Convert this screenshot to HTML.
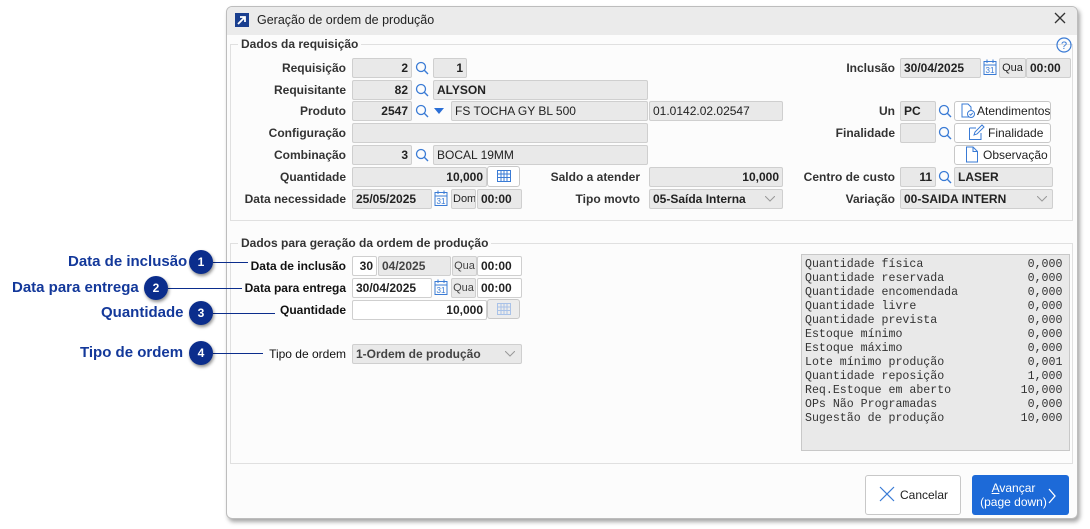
<!DOCTYPE html>
<html><head><meta charset="utf-8"><style>
*{box-sizing:border-box}
body{margin:0;width:1090px;height:529px;background:#fff;position:relative;overflow:hidden;font-family:"Liberation Sans",sans-serif;font-size:12px;color:#222}
.win{position:absolute;left:226px;top:6px;width:852px;height:513px;background:#fcfcfc;border:1px solid #bdbdbd;border-radius:6px;box-shadow:2px 3px 4px rgba(0,0,0,.35);overflow:hidden}
.tb{position:absolute;left:0;top:0;right:0;height:28px;background:#ebebeb}
.a{position:absolute}
.b{position:absolute;height:20px;border:1px solid #cfcfcf;border-radius:2px;background:#e9e9e9;font-weight:bold;font-size:12px;line-height:18px;padding:0 3px;white-space:nowrap;overflow:hidden;color:#222}
.w{background:#fff}
.r{text-align:right}
.n{font-weight:normal}
.s{font-weight:normal;font-size:11px;padding:0 1px;text-align:center}
.l{position:absolute;text-align:right;font-weight:bold;font-size:12px;color:#333;line-height:20px;white-space:nowrap}
.btn{position:absolute;height:20px;border:1px solid #c8c8c8;border-radius:3px;background:#fff;font-size:12px;line-height:18px;text-align:left}
.grp{position:absolute;border:1px solid #e0e0e0}
.gt{position:absolute;background:#fcfcfc;font-weight:bold;font-size:12px;color:#333;padding:0 3px}
.co{position:absolute;font-weight:bold;font-size:15px;color:#13389a;white-space:nowrap}
.c{position:absolute;width:24px;height:24px;border-radius:12px;background:#0b2d8c;color:#fff;font-weight:bold;font-size:12px;text-align:center;line-height:24px;box-shadow:1px 2px 3px rgba(0,0,0,.45);z-index:3}
.ln{position:absolute;height:1px;background:#0b2d8c;z-index:2}
.mono{font-family:"Liberation Mono",monospace;font-size:11.6px;line-height:14px;color:#333}
</style></head><body>

<div class="win">
<div class="tb"></div>
<div class="a" style="left:8px;top:6px;width:14px;height:14px;background:#1a3f8f"><svg width="14" height="14"><path d="M3 11 L10 4 M5 4 H10 V9" stroke="#fff" stroke-width="1.8" fill="none"/></svg></div>
<div class="a" style="left:30px;top:6px;font-size:12.5px;color:#222">Geração de ordem de produção</div>
<div class="a" style="left:826px;top:4px"><svg width="14" height="14"><path d="M2 2 L12 12 M12 2 L2 12" stroke="#333" stroke-width="1.3"/></svg></div>
</div>

<!-- callouts -->
<div class="co" style="left:68px;top:253px">Data de inclusão</div>
<div class="c" style="left:189px;top:250px">1</div>
<div class="ln" style="left:213px;top:262px;width:35px"></div>
<div class="co" style="left:12px;top:279px">Data para entrega</div>
<div class="c" style="left:144px;top:276px">2</div>
<div class="ln" style="left:168px;top:288px;width:74px"></div>
<div class="co" style="left:101px;top:304px">Quantidade</div>
<div class="c" style="left:189px;top:301px">3</div>
<div class="ln" style="left:213px;top:313px;width:62px"></div>
<div class="co" style="left:80px;top:344px">Tipo de ordem</div>
<div class="c" style="left:189px;top:341px">4</div>
<div class="ln" style="left:213px;top:353px;width:50px"></div>

<div class="grp" style="left:230px;top:44px;width:843px;height:177px"></div>
<div class="gt" style="left:238px;top:37px">Dados da requisição</div>
<svg class="a" style="left:1056px;top:37px" width="16" height="16"><circle cx="8" cy="8" r="7" fill="none" stroke="#3a7bd5" stroke-width="1.2"/><text x="8" y="12" font-size="11" text-anchor="middle" fill="#3a7bd5" font-family="Liberation Sans">?</text></svg>

<div class="l" style="left:230px;width:116px;top:58px">Requisição</div>
<div class="b r" style="left:352px;top:58px;width:60px">2</div>
<div class="b r" style="left:433px;top:58px;width:34px">1</div>
<div class="l" style="left:230px;width:116px;top:80px">Requisitante</div>
<div class="b r" style="left:352px;top:80px;width:60px">82</div>
<div class="b" style="left:433px;top:80px;width:215px">ALYSON</div>
<div class="l" style="left:230px;width:116px;top:101px">Produto</div>
<div class="b r" style="left:352px;top:101px;width:60px">2547</div>
<svg class="a" style="left:434px;top:108px" width="10" height="6"><path d="M0 0 H10 L5 6Z" fill="#2b6fd6"/></svg>
<div class="b n" style="left:451px;top:101px;width:197px">FS TOCHA GY BL 500</div>
<div class="b n" style="left:649px;top:101px;width:134px">01.0142.02.02547</div>
<div class="l" style="left:230px;width:116px;top:123px">Configuração</div>
<div class="b" style="left:352px;top:123px;width:296px"></div>
<div class="l" style="left:230px;width:116px;top:145px">Combinação</div>
<div class="b r" style="left:352px;top:145px;width:60px">3</div>
<div class="b n" style="left:433px;top:145px;width:215px">BOCAL 19MM</div>
<div class="l" style="left:230px;width:116px;top:167px">Quantidade</div>
<div class="b r" style="left:352px;top:167px;width:135px">10,000</div>
<div class="btn" style="left:487px;top:166px;width:33px;height:21px;text-align:center"><svg width="16" height="14" style="margin-top:2px"><path d="M1.5 1.5H14.5V12.5H1.5Z M1.5 5H14.5 M1.5 8.5H14.5 M5 1.5V12.5 M8 1.5V12.5 M11 1.5V12.5" stroke="#3a7bd5" fill="none"/></svg></div>
<div class="l" style="left:230px;width:116px;top:189px">Data necessidade</div>
<div class="b" style="left:352px;top:189px;width:80px">25/05/2025</div>
<div class="b s" style="left:451px;top:189px;width:25px">Dom</div>
<div class="b" style="left:477px;top:189px;width:45px">00:00</div>

<div class="l" style="left:520px;width:120px;top:167px">Saldo a atender</div>
<div class="b r" style="left:649px;top:167px;width:134px">10,000</div>
<div class="l" style="left:520px;width:120px;top:189px">Tipo movto</div>
<div class="b" style="left:649px;top:189px;width:134px">05-Saída Interna</div>

<div class="l" style="left:780px;width:115px;top:58px">Inclusão</div>
<div class="b" style="left:900px;top:58px;width:81px">30/04/2025</div>
<div class="b s" style="left:999px;top:58px;width:27px">Qua</div>
<div class="b" style="left:1026px;top:58px;width:45px">00:00</div>
<div class="l" style="left:780px;width:115px;top:101px">Un</div>
<div class="b" style="left:900px;top:101px;width:36px">PC</div>
<div class="btn" style="left:954px;top:101px;width:97px;padding-left:22px">Atendimentos</div>
<div class="l" style="left:780px;width:115px;top:123px">Finalidade</div>
<div class="b" style="left:900px;top:123px;width:36px"></div>
<div class="btn" style="left:954px;top:123px;width:97px;padding-left:33px">Finalidade</div>
<div class="btn" style="left:954px;top:145px;width:97px;padding-left:28px">Observação</div>
<div class="l" style="left:780px;width:115px;top:167px">Centro de custo</div>
<div class="b r" style="left:900px;top:167px;width:36px">11</div>
<div class="b" style="left:954px;top:167px;width:99px">LASER</div>
<div class="l" style="left:780px;width:115px;top:189px">Variação</div>
<div class="b" style="left:900px;top:189px;width:153px">00-SAIDA INTERN</div>

<svg class="a" style="left:765px;top:196px" width="10" height="6"><path d="M0 0L5 5L10 0" stroke="#999" fill="none"/></svg>
<svg class="a" style="left:1037px;top:196px" width="10" height="6"><path d="M0 0L5 5L10 0" stroke="#999" fill="none"/></svg>

<svg width="0" height="0" style="position:absolute"><defs><g id="m"><circle cx="6" cy="6" r="4.5" stroke="#3a7bd5" stroke-width="1.3" fill="none"/><path d="M9.3 9.3L13 13" stroke="#3a7bd5" stroke-width="1.4"/></g>
<g id="cal"><rect x="1" y="2.5" width="12" height="13" stroke="#3a7bd5" fill="none"/><path d="M1 6H13 M4 0.5V4 M10 0.5V4" stroke="#3a7bd5"/><text x="7" y="14" font-size="8" text-anchor="middle" fill="#3a7bd5" font-family="Liberation Sans">31</text></g></defs></svg>
<svg class="a" style="left:415px;top:61px" width="14" height="14"><use href="#m"/></svg>
<svg class="a" style="left:415px;top:83px" width="14" height="14"><use href="#m"/></svg>
<svg class="a" style="left:415px;top:104px" width="14" height="14"><use href="#m"/></svg>
<svg class="a" style="left:415px;top:148px" width="14" height="14"><use href="#m"/></svg>
<svg class="a" style="left:938px;top:104px" width="14" height="14"><use href="#m"/></svg>
<svg class="a" style="left:938px;top:126px" width="14" height="14"><use href="#m"/></svg>
<svg class="a" style="left:938px;top:170px" width="14" height="14"><use href="#m"/></svg>
<svg class="a" style="left:434px;top:190px" width="14" height="17"><use href="#cal"/></svg>
<svg class="a" style="left:983px;top:59px" width="14" height="17"><use href="#cal"/></svg>
<svg class="a" style="left:434px;top:279px" width="14" height="17"><use href="#cal"/></svg>
<svg class="a" style="left:960px;top:103px" width="16" height="16"><path d="M2 1H8L11 4V14H2Z" stroke="#3a7bd5" fill="none"/><circle cx="11" cy="11" r="3.5" fill="#fff" stroke="#3a7bd5"/><path d="M9.5 11L10.7 12.2L12.7 10" stroke="#3a7bd5" fill="none"/></svg>
<svg class="a" style="left:968px;top:124px" width="17" height="17"><path d="M1.5 4H8 M1.5 4V15.5H13V9" stroke="#3a7bd5" fill="none"/><path d="M6 11L7 8L14 1L16 3L9 10Z" stroke="#3a7bd5" fill="none"/></svg>
<svg class="a" style="left:965px;top:146px" width="14" height="17"><path d="M1.5 1H8L12.5 5.5V16H1.5Z M8 1V5.5H12.5" stroke="#3a7bd5" fill="none"/></svg>

<div class="grp" style="left:230px;top:243px;width:843px;height:221px"></div>
<div class="gt" style="left:238px;top:236px">Dados para geração da ordem de produção</div>

<div class="l" style="left:230px;width:116px;top:256px;color:#111">Data de inclusão</div>
<div class="b w r" style="left:352px;top:256px;width:25px">30</div>
<div class="b" style="left:378px;top:256px;width:73px;color:#444">04/2025</div>
<div class="b s" style="left:452px;top:256px;width:25px;color:#444">Qua</div>
<div class="b w" style="left:477px;top:256px;width:45px">00:00</div>
<div class="l" style="left:230px;width:116px;top:278px;color:#111">Data para entrega</div>
<div class="b w" style="left:352px;top:278px;width:80px">30/04/2025</div>
<div class="b s" style="left:451px;top:278px;width:25px;color:#444">Qua</div>
<div class="b w" style="left:477px;top:278px;width:45px">00:00</div>
<div class="l" style="left:230px;width:116px;top:300px;color:#111">Quantidade</div>
<div class="b w r" style="left:352px;top:300px;width:135px">10,000</div>
<div class="btn" style="left:487px;top:299px;width:33px;background:#ececec;text-align:center"><svg width="16" height="14" style="margin-top:2px"><path d="M1.5 1.5H14.5V12.5H1.5Z M1.5 5H14.5 M1.5 8.5H14.5 M5 1.5V12.5 M8 1.5V12.5 M11 1.5V12.5" stroke="#a9c2e8" fill="none"/></svg></div>
<div class="l" style="left:230px;width:116px;top:344px;font-weight:normal;color:#111">Tipo de ordem</div>
<div class="b" style="left:352px;top:344px;width:170px;color:#444">1-Ordem de produção</div>
<svg class="a" style="left:505px;top:351px" width="10" height="6"><path d="M0 0L5 5L10 0" stroke="#999" fill="none"/></svg>

<div class="a mono" style="left:801px;top:254px;width:269px;height:197px;background:#e9e9e9;border:1px solid #c8c8c8;padding:3px 0 0 3px;white-space:pre">Quantidade física               0,000
Quantidade reservada            0,000
Quantidade encomendada          0,000
Quantidade livre                0,000
Quantidade prevista             0,000
Estoque mínimo                  0,000
Estoque máximo                  0,000
Lote mínimo produção            0,001
Quantidade reposição            1,000
Req.Estoque em aberto          10,000
OPs Não Programadas             0,000
Sugestão de produção           10,000</div>

<div class="btn" style="left:865px;top:475px;width:96px;height:40px;line-height:38px;text-align:center"><svg width="18" height="18" style="vertical-align:-4px;margin-right:4px"><path d="M2 2L16 16M16 2L2 16" stroke="#3a7bd5" stroke-width="1.2"/></svg>Cancelar</div>
<div class="a" style="left:972px;top:475px;width:97px;height:40px;background:#1d6ad8;border-radius:3px;color:#fff;font-size:12px;line-height:14px;padding-top:6px;padding-right:14px;text-align:center"><span style="text-decoration:underline">A</span>vançar<br>(page down)</div>
<svg class="a" style="left:1047px;top:488px" width="10" height="16"><path d="M2 1L8 8L2 15" stroke="#fff" stroke-width="1.3" fill="none"/></svg>
</body></html>
